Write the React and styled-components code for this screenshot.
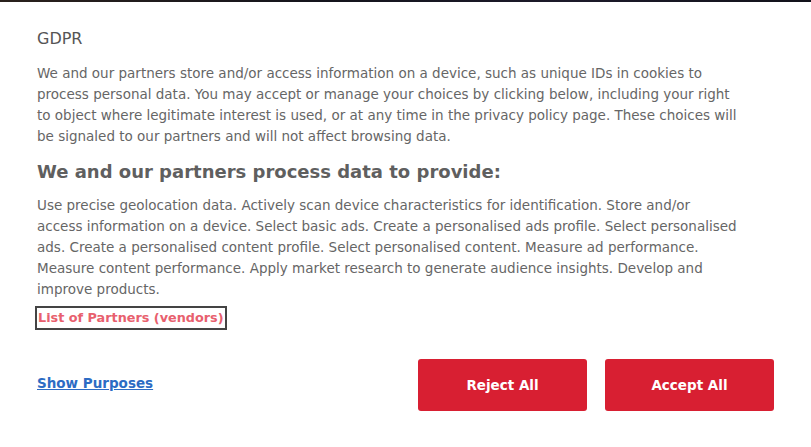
import styled, { createGlobalStyle } from "styled-components";

const GlobalStyle = createGlobalStyle`
  body {
    margin: 0;
    background: #ffffff;
    font-family: "DejaVu Sans", "Open Sans", sans-serif;
  }
`;

const TopStrip = styled.div`
  height: 2px;
  background: linear-gradient(90deg, #2a211c, #14141c 40%, #1c1a2a 70%, #12121a);
`;

const Dialog = styled.div`
  padding: 23px 37px 0 37px;
  color: #666666;
`;

const Title = styled.h2`
  margin: 0;
  font-size: 16px;
  font-weight: 500;
  line-height: 28px;
  color: #555555;
`;

const Paragraph = styled.p`
  margin: ${(p) => (p.$tight ? "8px" : "10px")} 0 0;
  font-size: 13.5px;
  line-height: 21px;
  max-width: 702px;
`;

const SubHeading = styled.h3`
  margin: 10px 0 0;
  font-size: 18px;
  font-weight: 700;
  line-height: 30px;
  color: #5f5f5f;
`;

const VendorLink = styled.a`
  display: inline-block;
  margin-top: 6px;
  margin-left: -2px;
  padding: 1px 1px;
  border: 2px solid #444444;
  color: #e8606e;
  font-size: 12.8px;
  font-weight: 700;
  line-height: 18px;
  text-decoration: none;
`;

const Footer = styled.div`
  display: flex;
  align-items: center;
  justify-content: space-between;
  margin-top: 29px;
`;

const TextLink = styled.a`
  margin-bottom: 4px;
  color: #2c6cc4;
  font-size: 13.5px;
  font-weight: 700;
  text-decoration: underline;
`;

const Buttons = styled.div`
  display: flex;
  gap: 18px;
`;

const Button = styled.button`
  width: 169px;
  height: 52px;
  border: none;
  border-radius: 3px;
  background: #d81f32;
  color: #ffffff;
  font-family: inherit;
  font-size: 13.5px;
  font-weight: 700;
  cursor: pointer;
`;

const App = () => {
  return (
    <>
      <GlobalStyle />
      <TopStrip />
      <Dialog>
        <Title>GDPR</Title>
        <Paragraph>
          We and our partners store and/or access information on a device, such as unique IDs in
          cookies to process personal data. You may accept or manage your choices by clicking below,
          including your right to object where legitimate interest is used, or at any time in the
          privacy policy page. These choices will be signaled to our partners and will not affect
          browsing data.
        </Paragraph>
        <SubHeading>We and our partners process data to provide:</SubHeading>
        <Paragraph $tight>
          Use precise geolocation data. Actively scan device characteristics for identification.
          Store and/or access information on a device. Select basic ads. Create a personalised ads
          profile. Select personalised ads. Create a personalised content profile. Select
          personalised content. Measure ad performance. Measure content performance. Apply market
          research to generate audience insights. Develop and improve products.
        </Paragraph>
        <VendorLink href="#">List of Partners (vendors)</VendorLink>
        <Footer>
          <TextLink href="#">Show Purposes</TextLink>
          <Buttons>
            <Button>Reject All</Button>
            <Button>Accept All</Button>
          </Buttons>
        </Footer>
      </Dialog>
    </>
  );
};

export default App;
